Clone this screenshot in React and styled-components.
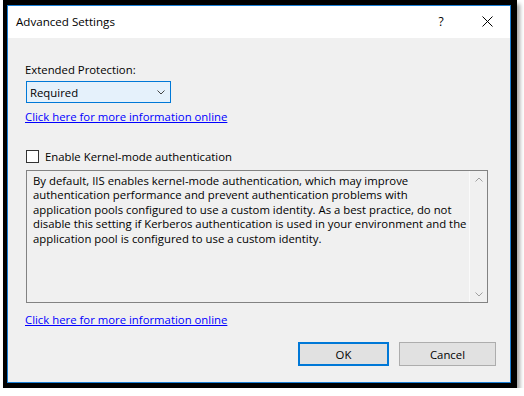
import React from "react";
import styled, { createGlobalStyle } from "styled-components";

const Global = createGlobalStyle`
  html, body {
    margin: 0;
    background: #ffffff;
  }
  body {
    font-family: "Open Sans", "Noto Sans", sans-serif;
    font-size: 11.35px;
    color: #000;
  }
`;

const Frame = styled.div`
  width: max-content;
  margin-left: 3px;
  border-style: solid;
  border-color: #000;
  border-width: 5px 6px 5px 4px;
  box-shadow: 3px 4px 4px rgba(0, 0, 0, 0.35);
`;

const Win = styled.div`
  width: 504px;
  height: 378px;
  box-sizing: border-box;
  border: 1px solid #1a7fd6;
  display: flex;
  flex-direction: column;
`;

const TitleBar = styled.div`
  height: 32px;
  background: #fff;
  display: flex;
  align-items: center;
  padding-left: 8px;
`;

const Title = styled.div`
  flex: 1;
  font-size: 11.6px;
  margin-top: -2px;
`;

const TitleButton = styled.div`
  width: ${(p) => p.$w}px;
  display: flex;
  justify-content: center;
  align-items: center;
  margin-top: -2px;
`;

const Body = styled.div`
  flex: 1;
  background: #f0f0f0;
  padding: 24px 14px 0 18px;
  display: flex;
  flex-direction: column;
  align-items: flex-start;
`;

const Label = styled.div`
  line-height: 15px;
  margin-left: -1px;
`;

const Select = styled.div`
  margin-top: 4px;
  width: 145px;
  height: 22px;
  box-sizing: border-box;
  border: 1px solid #0078d7;
  background: #e5f1fb;
  display: flex;
  align-items: center;
  justify-content: space-between;
  padding: 0 5px 0 3px;
`;

const Link = styled.a`
  margin-top: ${(p) => p.$mt}px;
  margin-left: -1px;
  line-height: 15px;
  color: #0000ff;
  text-decoration: underline;
  cursor: pointer;
`;

const CheckRow = styled.label`
  margin-top: 25px;
  display: flex;
  align-items: center;
  gap: 6px;
  line-height: 15px;
`;

const Box = styled.span`
  width: 13px;
  height: 13px;
  box-sizing: border-box;
  border: 1px solid #333;
  background: #fff;
`;

const TextArea = styled.div`
  margin-top: 6px;
  width: 462px;
  height: 133px;
  box-sizing: border-box;
  border: 1px solid #828282;
  display: flex;
`;

const TextContent = styled.div`
  flex: 1;
  padding: 3px 0 0 6px;
  line-height: 14.4px;
  white-space: nowrap;
`;

const ScrollBar = styled.div`
  width: 17px;
  border-left: 1px solid #fafafa;
  display: flex;
  flex-direction: column;
  justify-content: space-between;
  align-items: center;
  padding: 6px 0 5px;
`;

const Buttons = styled.div`
  align-self: stretch;
  margin-top: 15px;
  display: flex;
  justify-content: flex-end;
  gap: 10px;
`;

const Button = styled.button`
  width: ${(p) => p.$w}px;
  height: 24px;
  box-sizing: border-box;
  font: inherit;
  color: #000;
  background: #e1e1e1;
  border: ${(p) => (p.$default ? "2px solid #0078d7" : "1px solid #adadad")};
  padding: 0;
`;

const Chevron = ({ up, color = "#a0a0a0", w = 8 }) => (
  <svg width={w} height={w / 2 + 1} viewBox="0 0 8 5">
    <path
      d={up ? "M0.5 4.5 L4 1 L7.5 4.5" : "M0.5 0.5 L4 4 L7.5 0.5"}
      fill="none"
      stroke={color}
      strokeWidth="1"
    />
  </svg>
);

export default function App() {
  return (
    <>
      <Global />
      <Frame>
        <Win>
          <TitleBar>
            <Title>Advanced Settings</Title>
            <TitleButton $w={46}>
              <span style={{ fontSize: 12 }}>?</span>
            </TitleButton>
            <TitleButton $w={46}>
              <svg width="11" height="11" viewBox="0 0 11 11">
                <path d="M0.5 0.5 L10.5 10.5 M10.5 0.5 L0.5 10.5" stroke="#000" strokeWidth="1" />
              </svg>
            </TitleButton>
          </TitleBar>
          <Body>
            <Label>Extended Protection:</Label>
            <Select>
              <span>Required</span>
              <Chevron color="#444" />
            </Select>
            <Link $mt={6}>Click here for more information online</Link>
            <CheckRow>
              <Box />
              <span>Enable Kernel-mode authentication</span>
            </CheckRow>
            <TextArea>
              <TextContent>
                By default, IIS enables kernel-mode authentication, which may improve
                <br />
                authentication performance and prevent authentication problems with
                <br />
                application pools configured to use a custom identity. As a best practice, do not
                <br />
                disable this setting if Kerberos authentication is used in your environment and the
                <br />
                application pool is configured to use a custom identity.
              </TextContent>
              <ScrollBar>
                <Chevron up />
                <Chevron />
              </ScrollBar>
            </TextArea>
            <Link $mt={9}>Click here for more information online</Link>
            <Buttons>
              <Button $w={91} $default>OK</Button>
              <Button $w={97}>Cancel</Button>
            </Buttons>
          </Body>
        </Win>
      </Frame>
    </>
  );
}
